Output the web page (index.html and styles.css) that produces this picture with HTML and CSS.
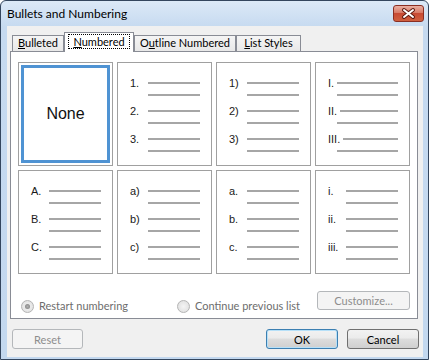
FILE: index.html
```html
<!DOCTYPE html>
<html lang="en">
<head>
    <meta charset="UTF-8">
    <title>Bullets and Numbering</title>
    <link rel="stylesheet" href="styles.css">
</head>
<body>
    <div class="window">
        <div class="titlebar">
            <span class="title">Bullets and Numbering</span>
            <button class="close-btn" aria-label="Close">
                <svg width="29" height="15" viewBox="0 0 29 15">
                    <path d="M10 4l9 7M19 4l-9 7" stroke="#5e1a10" stroke-width="4" stroke-linecap="round"/>
                    <path d="M10 4l9 7M19 4l-9 7" stroke="#fff" stroke-width="2" stroke-linecap="round"/>
                </svg>
            </button>
        </div>

        <div class="client">
            <div class="tabs">
                <div class="tab tab-bulleted"><u>B</u>ulleted</div>
                <div class="tab tab-numbered active"><span class="focus"><u>N</u>umbered</span></div>
                <div class="tab tab-outline">O<u>u</u>tline Numbered</div>
                <div class="tab tab-styles"><u>L</u>ist Styles</div>
            </div>

            <div class="panel">
                <div class="styles-grid">
                    <div class="cell selected"><div class="none">None</div></div>

                    <div class="cell">
                        <div class="item"><span class="num">1.</span><i class="ln"></i><i class="ln cont"></i></div>
                        <div class="item"><span class="num">2.</span><i class="ln"></i><i class="ln cont"></i></div>
                        <div class="item"><span class="num">3.</span><i class="ln"></i><i class="ln cont"></i></div>
                    </div>

                    <div class="cell">
                        <div class="item"><span class="num">1)</span><i class="ln"></i><i class="ln cont"></i></div>
                        <div class="item"><span class="num">2)</span><i class="ln"></i><i class="ln cont"></i></div>
                        <div class="item"><span class="num">3)</span><i class="ln"></i><i class="ln cont"></i></div>
                    </div>

                    <div class="cell roman">
                        <div class="item"><span class="num">I.</span><i class="ln"></i><i class="ln cont"></i></div>
                        <div class="item"><span class="num">II.</span><i class="ln"></i><i class="ln cont"></i></div>
                        <div class="item"><span class="num">III.</span><i class="ln"></i><i class="ln cont"></i></div>
                    </div>

                    <div class="cell">
                        <div class="item"><span class="num">A.</span><i class="ln"></i><i class="ln cont"></i></div>
                        <div class="item"><span class="num">B.</span><i class="ln"></i><i class="ln cont"></i></div>
                        <div class="item"><span class="num">C.</span><i class="ln"></i><i class="ln cont"></i></div>
                    </div>

                    <div class="cell">
                        <div class="item"><span class="num">a)</span><i class="ln"></i><i class="ln cont"></i></div>
                        <div class="item"><span class="num">b)</span><i class="ln"></i><i class="ln cont"></i></div>
                        <div class="item"><span class="num">c)</span><i class="ln"></i><i class="ln cont"></i></div>
                    </div>

                    <div class="cell">
                        <div class="item"><span class="num">a.</span><i class="ln"></i><i class="ln cont"></i></div>
                        <div class="item"><span class="num">b.</span><i class="ln"></i><i class="ln cont"></i></div>
                        <div class="item"><span class="num">c.</span><i class="ln"></i><i class="ln cont"></i></div>
                    </div>

                    <div class="cell">
                        <div class="item"><span class="num">i.</span><i class="ln"></i><i class="ln cont"></i></div>
                        <div class="item"><span class="num">ii.</span><i class="ln"></i><i class="ln cont"></i></div>
                        <div class="item"><span class="num">iii.</span><i class="ln"></i><i class="ln cont"></i></div>
                    </div>
                </div>

                <div class="options">
                    <label class="radio checked"><span class="dot"></span>Restart numbering</label>
                    <label class="radio"><span class="dot"></span>Continue previous list</label>
                    <button class="btn customize" disabled>Customize...</button>
                </div>
            </div>

            <div class="footer">
                <button class="btn" disabled>Reset</button>
                <span class="spacer"></span>
                <button class="btn default">OK</button>
                <button class="btn">Cancel</button>
            </div>
        </div>
    </div>
</body>
</html>
```

FILE: styles.css
```css
body {
    margin: 0;
    font-family: Lato, "Noto Sans", sans-serif;
    font-size: 11px;
    color: #000;
}

.window {
    width: 429px;
    height: 360px;
    box-sizing: border-box;
    border: 1px solid #34465e;
    border-radius: 6px 6px 0 0;
    background: linear-gradient(#dce9f7, #c6daf0 26px, #c3d8ef);
    display: flex;
    flex-direction: column;
    overflow: hidden;
}

.titlebar {
    flex-shrink: 0;
    height: 25px;
    display: flex;
    align-items: center;
    justify-content: space-between;
    padding: 0 4px 0 6px;
    font-size: 12px;
}

.close-btn {
    width: 31px;
    height: 17px;
    padding: 0;
    border: 1px solid #8a2e22;
    border-radius: 3px;
    background: linear-gradient(#eab0a2, #d97a66 45%, #c84a33 50%, #d0603f);
    display: flex;
    align-items: center;
    justify-content: center;
}

.client {
    flex: 1;
    margin: 0 5px 2px 6px;
    background: #f0f0f0;
    padding-top: 6px;
    display: flex;
    flex-direction: column;
}

/* tabs */
.tabs {
    flex-shrink: 0;
    display: flex;
    align-items: flex-end;
    height: 19px;
    padding-left: 5px;
    position: relative;
    z-index: 1;
}

.tab {
    height: 16px;
    box-sizing: border-box;
    border: 1px solid #898c95;
    border-bottom: none;
    line-height: 14px;
    text-align: center;
    background: linear-gradient(#f5f5f5, #e8e8e8);
    white-space: nowrap;
}

.tab-bulleted { width: 52px; }
.tab-numbered { width: 70px; }
.tab-outline { width: 102px; }
.tab-styles { width: 65px; }

.tab.active {
    height: 20px;
    margin-bottom: -1px;
    background: #fff;
    padding-top: 2px;
}

.focus {
    border: 1px dotted #000;
    padding: 0 4px;
}

.panel {
    flex-shrink: 0;
    margin: 0 5px 0 3px;
    border: 1px solid #898c95;
    background: #fff;
    padding: 10px 7px 5px;
}

/* numbering samples */
.styles-grid {
    display: grid;
    grid-template-columns: repeat(4, 95px);
    grid-auto-rows: 104px;
    gap: 4px;
}

.cell {
    box-sizing: border-box;
    border: 1px solid #a0a0a0;
    padding: 14px 0 0 12px;
    display: flex;
    flex-direction: column;
    gap: 4px;
    font-family: "Liberation Sans", Arial, sans-serif;
    font-size: 11px;
}

.cell.selected {
    padding: 2px;
}

.none {
    flex: 1;
    border: 3px solid #4f93d3;
    display: flex;
    align-items: center;
    justify-content: center;
    font-size: 16px;
    color: #111;
}

.item {
    display: grid;
    grid-template-columns: 18px 52px;
    grid-template-rows: 12px 12px;
    line-height: 12px;
}

.num {
    color: #1a1a1a;
}

.ln {
    display: block;
    height: 2px;
    align-self: center;
    background: #a6a6a6;
}

.ln.cont {
    grid-column: 2;
}

.roman .item {
    width: 70px;
    grid-template-columns: auto 1fr;
}

.roman .ln {
    margin-left: 3px;
}

.roman .ln.cont {
    grid-column: 1 / -1;
    margin-left: 9px;
}

/* options row */
.options {
    display: grid;
    grid-template-columns: 156px 1fr 93px;
    align-items: start;
    margin-top: 17px;
    padding-left: 3px;
}

.radio {
    display: flex;
    align-items: center;
    gap: 5px;
    margin-top: 8px;
    line-height: 14px;
    color: #6d6d6d;
    white-space: nowrap;
}

.dot {
    width: 11px;
    height: 11px;
    border: 1px solid #b4b4b4;
    border-radius: 50%;
    background: radial-gradient(#f4f4f4, #dcdcdc);
    display: flex;
    align-items: center;
    justify-content: center;
}

.radio.checked .dot::after {
    content: "";
    width: 5px;
    height: 5px;
    border-radius: 50%;
    background: radial-gradient(#b0b0b0, #7d7d7d);
}

/* buttons */
.btn {
    font: inherit;
    width: 72px;
    height: 20px;
    padding: 0;
    border: 1px solid #707070;
    border-radius: 3px;
    background: linear-gradient(#f2f2f2, #ebebeb 45%, #dddddd 50%, #cfcfcf);
    color: #000;
}

.btn:disabled {
    border-color: #b4b7ba;
    background: #f4f4f4;
    color: #8d8d8d;
}

.btn.default {
    border-color: #3c7fb1;
    box-shadow: inset 0 0 0 1px #b6e0f8;
}

.customize {
    width: 93px;
    height: 19px;
}

.footer {
    flex-shrink: 0;
    display: flex;
    gap: 9px;
    padding: 10px 4px 0 5px;
}

.footer .btn:first-child {
    width: 71px;
}

.spacer {
    flex: 1;
}
```
